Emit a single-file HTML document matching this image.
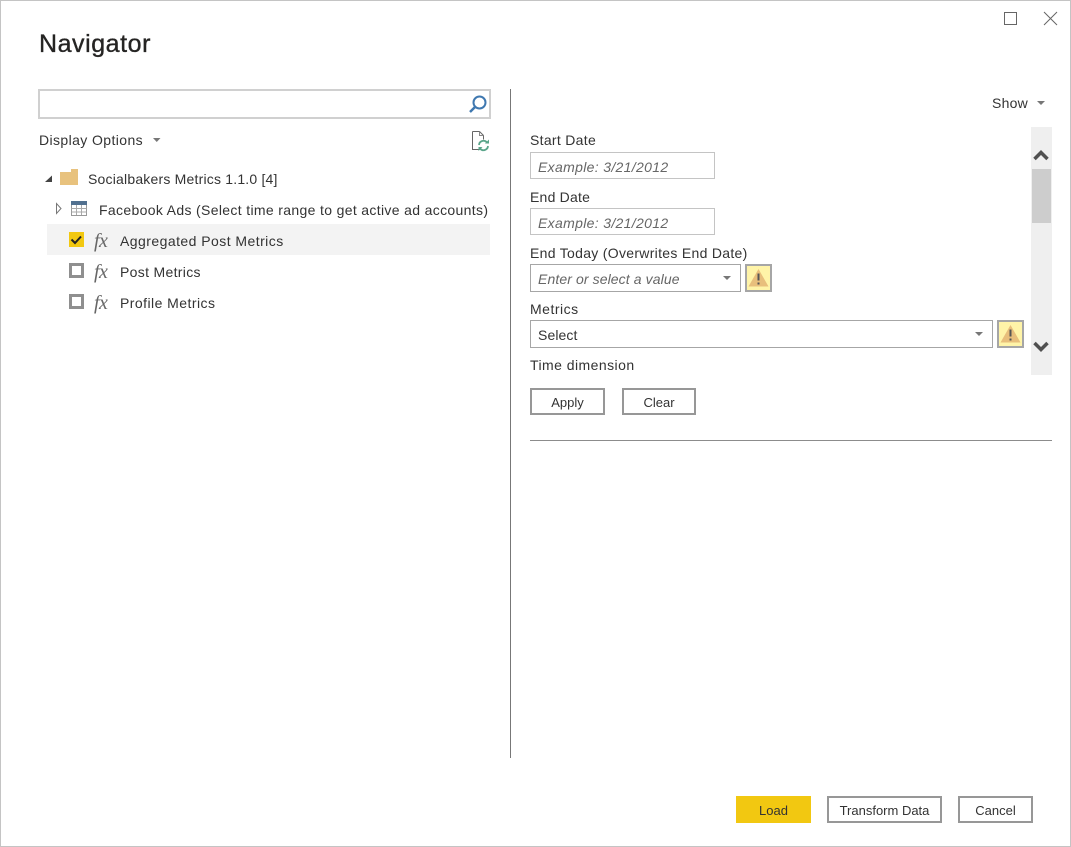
<!DOCTYPE html>
<html><head><meta charset="utf-8"><style>
html,body{margin:0;padding:0;background:#fff}
#p{position:relative;width:1071px;height:847px;overflow:hidden;background:#fff;font-family:"Liberation Sans",sans-serif;color:#333;font-size:14px}
#p>*{position:absolute;box-sizing:border-box}
.t{white-space:nowrap;line-height:18px;height:18px}
.b{border:1px solid #a6a6a6;background:#fff}
.btn{border:2px solid #979797;background:#fff;text-align:center;font-size:13px;line-height:26px;color:#333;white-space:nowrap}
.i{font-style:italic;color:#666}
.w{background:#fff4a8;border:2px solid #a6a6a6}
.fx{font-family:"Liberation Serif",serif;font-style:italic;font-size:20px;color:#666;letter-spacing:-.5px}
svg{position:absolute;overflow:visible}
</style></head><body><div id="p">
<div style="left:0;top:0;width:1071px;height:847px;border:1px solid #c4c4c4"></div>
<svg style="left:0;top:0" width="1071" height="847">
<rect x="1004.500" y="12.500" width="12" height="12" fill="none" stroke="#666"/>
<path d="M1044 12L1057 25M1057 12L1044 25" stroke="#666" fill="none"/>
</svg>
<div class="t" style="left:39px;top:29px;font-size:25px;line-height:30px;height:30px;letter-spacing:.55px;-webkit-text-stroke:.35px #252423;color:#252423">Navigator</div>
<div style="left:38px;top:89px;width:453px;height:30px;border:2px solid #d0d0d0"></div>
<svg style="left:0;top:0" width="1071" height="847">
<circle cx="479.500" cy="102.500" r="6" fill="none" stroke="#3f78b0" stroke-width="2"/>
<path d="M475 107L470 112" stroke="#3f78b0" stroke-width="2.500" fill="none"/>
<path d="M472.500 131.500h7l4 4v4M482 149.500h-9.500v-18" fill="none" stroke="#666"/>
<path d="M479.500 131.500v4h4" fill="none" stroke="#888"/>
<path d="M479 145a4.500 4.500 0 0 1 8-2.500M488 146a4.500 4.500 0 0 1-8 2.500" fill="none" stroke="#5aa58a" stroke-width="1.800"/>
<path d="M489 139.500v4h-4zM478.500 151v-4h4z" fill="#5aa58a"/>
<path d="M153 138h7.500l-3.750 4z" fill="#777"/>
<path d="M1037 101h8l-4 4z" fill="#777"/>
<path d="M45 182l7-6.500v6.500z" fill="#444"/>
<path d="M60 172h11v-3h7v16h-18z" fill="#e8c27e"/>
<path d="M56.500 203.500v10l4.500-5z" fill="#fff" stroke="#777"/>
<rect x="71.500" y="201.500" width="15" height="14" fill="#fff" stroke="#999"/>
<rect x="71" y="201" width="16" height="4" fill="#51708f"/>
<path d="M71.500 208.500h15M71.500 212h15M76.500 205v10M81.500 205v10" stroke="#aaa" fill="none"/>
</svg>
<div class="t" style="left:39px;top:131px;letter-spacing:.4px">Display Options</div>
<div class="t" style="left:88px;top:170px;letter-spacing:.2px">Socialbakers Metrics 1.1.0 [4]</div>
<div class="t" style="left:99px;top:201px;letter-spacing:.34px">Facebook Ads (Select time range to get active ad accounts)</div>
<div style="left:47px;top:224px;width:443px;height:31px;background:#f3f3f3"></div>
<div style="left:69px;top:232px;width:15px;height:15px;background:#f2c811"></div>
<div style="left:69px;top:263px;width:15px;height:15px;border:3px solid #8f8f8f;background:#fff"></div>
<div style="left:69px;top:294px;width:15px;height:15px;border:3px solid #8f8f8f;background:#fff"></div>
<svg style="left:0;top:0" width="1071" height="847">
<path d="M71.500 239.500l3.500 3.500 6-6.500" fill="none" stroke="#222" stroke-width="2"/>
</svg>
<div class="t fx" style="left:94px;top:232px">fx</div>
<div class="t fx" style="left:94px;top:263px">fx</div>
<div class="t fx" style="left:94px;top:294px">fx</div>
<div class="t" style="left:120px;top:232px;letter-spacing:.45px">Aggregated Post Metrics</div>
<div class="t" style="left:120px;top:263px;letter-spacing:.32px">Post Metrics</div>
<div class="t" style="left:120px;top:294px;letter-spacing:.45px">Profile Metrics</div>
<div style="left:510px;top:89px;width:1px;height:669px;background:#777"></div>
<div class="t" style="left:992px;top:94px;letter-spacing:.25px">Show</div>
<div style="left:1031px;top:127px;width:21px;height:248px;background:#efefef"></div>
<div style="left:1032px;top:169px;width:19px;height:54px;background:#cdcdcd"></div>
<svg style="left:0;top:0" width="1071" height="847">
<path d="M1034.500 159l6.500-6.500 6.500 6.500" fill="none" stroke="#505050" stroke-width="3.500"/>
<path d="M1034.500 343l6.500 6.500 6.500-6.500" fill="none" stroke="#505050" stroke-width="3.500"/>
</svg>
<div class="t" style="left:530px;top:131px;letter-spacing:.3px">Start Date</div>
<div class="b" style="left:530px;top:152px;width:185px;height:27px;border-color:#c4c4c4"></div>
<div class="t i" style="left:538px;top:158px;letter-spacing:.33px">Example: 3/21/2012</div>
<div class="t" style="left:530px;top:188px;letter-spacing:.22px">End Date</div>
<div class="b" style="left:530px;top:208px;width:185px;height:27px;border-color:#c4c4c4"></div>
<div class="t i" style="left:538px;top:214px;letter-spacing:.33px">Example: 3/21/2012</div>
<div class="t" style="left:530px;top:244px;letter-spacing:.3px">End Today (Overwrites End Date)</div>
<div class="b" style="left:530px;top:264px;width:211px;height:28px"></div>
<div class="t i" style="left:538px;top:270px;letter-spacing:.1px">Enter or select a value</div>
<div class="w" style="left:745px;top:264px;width:27px;height:28px"></div>
<div class="t" style="left:530px;top:300px;letter-spacing:.5px">Metrics</div>
<div class="b" style="left:530px;top:320px;width:463px;height:28px"></div>
<div class="t" style="left:538px;top:326px;letter-spacing:.1px">Select</div>
<div class="w" style="left:997px;top:320px;width:27px;height:28px"></div>
<div class="t" style="left:530px;top:356px;letter-spacing:.45px">Time dimension</div>
<svg style="left:0;top:0" width="1071" height="847">
<path d="M723 276h8l-4 4z" fill="#777"/>
<path d="M975 332h8l-4 4z" fill="#777"/>
<path d="M758.500 269l10 17.500h-20z" fill="#e8bf7c"/>
<path d="M1010.500 325l10 17.500h-20z" fill="#e8bf7c"/>
<path d="M758.500 273.500v7M1010.500 329.500v7" stroke="#555" stroke-width="2"/>
<path d="M757.500 282.500h2v2h-2zM1009.500 338.500h2v2h-2z" fill="#555"/>
</svg>
<div class="btn" style="left:530px;top:388px;width:75px;height:27px">Apply</div>
<div class="btn" style="left:622px;top:388px;width:74px;height:27px">Clear</div>
<div style="left:530px;top:440px;width:522px;height:1px;background:#8c8c8c"></div>
<div class="btn" style="left:736px;top:796px;width:75px;height:27px;background:#f2c811;border-color:#f2c811">Load</div>
<div class="btn" style="left:827px;top:796px;width:115px;height:27px">Transform Data</div>
<div class="btn" style="left:958px;top:796px;width:75px;height:27px">Cancel</div>
</div></body></html>
